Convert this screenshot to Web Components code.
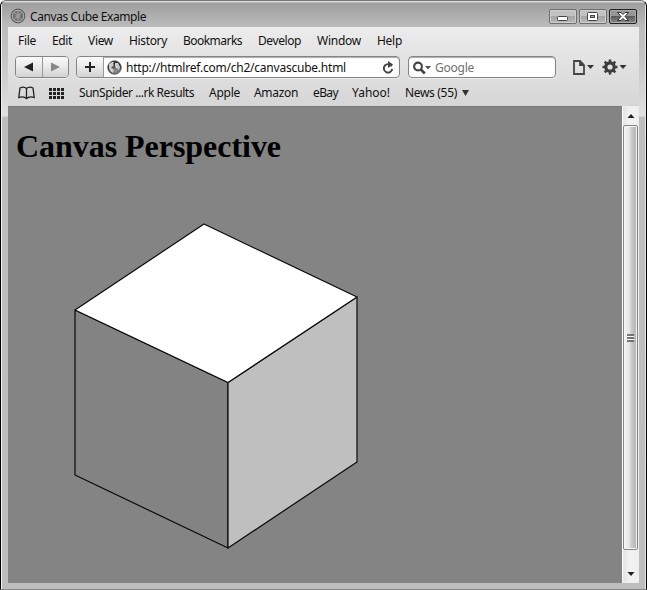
<!DOCTYPE html>
<html lang="en"><head><meta charset="utf-8"><title>Canvas Cube Example</title>
<style>html,body{margin:0;height:100%;overflow:hidden;background:#fff}</style></head>
<body>
<browser-window>
  <title-bar slot="title">Canvas Cube Example</title-bar>
  <menu-bar slot="chrome"></menu-bar>
  <tool-bar slot="chrome"></tool-bar>
  <bookmark-bar slot="chrome"></bookmark-bar>
  <page-view slot="page"><page-heading>Canvas Perspective</page-heading><cube-drawing></cube-drawing></page-view>
  <scroll-bar slot="page"></scroll-bar>
</browser-window>
<script>
function define(name, html, ready){
  customElements.define(name, class extends HTMLElement{
    constructor(){ super(); this.attachShadow({mode:'open'}).innerHTML = html; }
    connectedCallback(){ if(ready) ready(this); }
  });
}

/* A one-line label whose tracking is adjusted to fill the width in its "w" attribute. */
define('fit-label', `<style>
:host{display:block;flex:none;white-space:nowrap;height:16px;line-height:16px}
span{display:inline-block}
</style><span><slot></slot></span>`, el=>{
  const s = el.shadowRoot.querySelector('span'), w = +el.getAttribute('w');
  el.style.width = w + 'px';
  const n = el.textContent.length;
  s.style.letterSpacing = ((w - s.getBoundingClientRect().width) / n) + 'px';
});

define('browser-window', `<style>
:host{display:grid;box-sizing:border-box;width:647px;height:590px;grid-template-rows:26px 79px 477px 5px;
 grid-template-columns:6px 631px 6px;border:1px solid #111;border-left-color:#000;border-top-color:#777;border-right:1px solid #000;border-bottom:1px solid #888;
 border-radius:6px 6px 0 0;background:linear-gradient(90deg,#f2f2f2 1px,transparent 1px,transparent 644px,#e4e4e4 644px),linear-gradient(#d8d8d8 0,#d8d8d8 1px,#9e9e9e 2px,#bcbcbc 26px,#c6c6c6 60px,#e0e0e0 115px,#bebebe 116px,#bdbdbd 100%);
 font:12px "Noto Sans","Open Sans",sans-serif;color:#111;overflow:hidden;padding-left:1px;padding-right:1px}
.title{grid-column:1/4}
.chrome{grid-column:2;display:flex;flex-direction:column;background:linear-gradient(#ececec,#e2e2e2 45%,#d6d6d6)}
.page{grid-column:2;display:grid;grid-template-columns:614px 17px}
</style><div class="title"><slot name="title"></slot></div><div class="chrome"><slot name="chrome"></slot></div><div class="page"><slot name="page"></slot></div>`);

define('window-button', `<style>
:host{display:block;box-sizing:border-box;width:28px;height:15px;border:1px solid #6e6e6e;border-radius:2px;
 background:linear-gradient(#c2c2c2 45%,#a5a5a5 50%,#b8b8b8);box-shadow:inset 0 0 0 1px #cfcfcf}
:host([kind=close]){border-color:#222;background:linear-gradient(#969696 45%,#5a5a5a 50%,#8b8b8b);box-shadow:inset 0 0 0 1px #aaa}
svg{display:block}
</style><svg width="26" height="13"></svg>`, el=>{
  el.shadowRoot.querySelector('svg').innerHTML = {
    min:'<rect x="7.500" y="6.500" width="10" height="4" rx="1" fill="#fff" stroke="#444"/>',
    max:'<rect x="7.500" y="2.500" width="10" height="8" rx="1" fill="#fff" stroke="#444"/><rect x="10.500" y="5.500" width="4" height="2" fill="#aaa" stroke="#444"/>',
    close:'<path d="M7.500 2.500h3.500l2 2 2-2h3.500l-3.500 4 3.500 4H15l-2-2-2 2H7.500l3.500-4z" fill="#fff" stroke="#333"/>'
  }[el.getAttribute('kind')];
});

define('globe-icon', `<style>:host{display:block;width:15px;height:15px;flex:none}svg{display:block}</style>
<svg width="15" height="15" viewBox="0 0 15 15"><defs><radialGradient id="g" cx=".6" cy=".75"><stop stop-color="#999"/><stop offset="1" stop-color="#333"/></radialGradient></defs>
<circle cx="7.500" cy="7.500" r="6.800" fill="url(#g)" stroke="#555" stroke-width=".8"/>
<path d="M2 4 5 2 7 2 6 4 7 5 5 7 4 7 7 10 6 13 3 11 2 8zM8 3l3 0 2 4-1 4-1-2-2-1-1-2z" fill="#ccc"/></svg>`);

define('compass-icon', `<style>:host{display:block;width:16px;height:16px;flex:none}svg{display:block}</style>
<svg width="16" height="16" viewBox="0 0 16 16"><circle cx="8" cy="8" r="6.900" fill="#8d8d8d" stroke="#555"/><circle cx="8" cy="8" r="5.500" fill="#696969" stroke="#bbb" stroke-width=".8"/>
<path d="M4.500 5 8 7l3.500-2M5 8h6M4.500 11 8 9l3 2M8 3v10" stroke="#bbb" fill="none" stroke-width=".8"/><path d="m11.500 4.500-2.600 4.400-4.400 2.600 2.600-4.400z" fill="#999"/></svg>`);

define('title-bar', `<style>
:host{display:flex;height:26px;align-items:flex-start}
compass-icon{margin:7px 4px 0 8px}
fit-label{margin-top:8px}
.buttons{display:flex;gap:2px;margin:8px 0 0 auto;padding-right:8px}
</style><compass-icon></compass-icon><fit-label w="116"></fit-label><div class="buttons"><window-button kind="min"></window-button><window-button kind="max"></window-button><window-button kind="close"></window-button></div>`, el=>{
  const old = el.shadowRoot.querySelector('fit-label'), label = document.createElement('fit-label');
  label.setAttribute('w','116'); label.textContent = el.textContent; old.replaceWith(label);
});

define('menu-bar', `<style>:host{display:flex;height:27px;box-sizing:border-box;padding:6px 0 0 10px;gap:16px}</style>
<fit-label w="18">File</fit-label><fit-label w="20">Edit</fit-label><fit-label w="25">View</fit-label><fit-label w="38">History</fit-label><fit-label w="59">Bookmarks</fit-label><fit-label w="43">Develop</fit-label><fit-label w="44">Window</fit-label><fit-label w="25">Help</fit-label>`);

define('tool-bar', `<style>
:host{display:flex;height:26px;box-sizing:border-box;padding:2px 0 0 7px}
.box{box-sizing:border-box;height:22px;border:1px solid #858585;border-radius:4px;display:flex;overflow:hidden;background:#fff;box-shadow:inset 0 1px 1px #aaa,0 1px #eee}
.btn{display:grid;place-items:center;background:linear-gradient(#fafafa,#e9e9e9 50%,#d2d2d2);border-right:1px solid #999;height:20px;width:26px;box-sizing:border-box}
.nav{width:54px;margin-right:7px}.nav .btn:last-child{border:0}
.url{width:324px;margin-right:8px}
.url globe-icon{margin:3px 4px 0 3px}
fit-label{margin-top:3px}
.reload{margin:4px 4px 0 auto}
.search{width:148px;color:#707070}
svg{display:block;flex:none}
</style>
<div class="box nav"><div class="btn" style="width:27px"><svg width="9" height="10"><path d="M0 5 9 .5v9z" fill="#222"/></svg></div><div class="btn"><svg width="9" height="10"><path d="M9 5 0 .5v9z" fill="#888"/></svg></div></div>
<div class="box url"><div class="btn" style="width:27px"><svg width="10" height="10"><path d="M5 0v10M0 5h10" stroke="#222" stroke-width="2"/></svg></div><globe-icon></globe-icon><fit-label w="220">http://htmlref.com/ch2/canvascube.html</fit-label>
<svg class="reload" width="14" height="14"><path d="M10.700 5.300A4.200 4.200 0 1 0 11.200 8" fill="none" stroke="#444" stroke-width="1.900"/><path d="M7 0l5 3.500L7 7z" fill="#444"/></svg></div>
<div class="box search"><svg style="margin:4px 4px 0 4px" width="18" height="15"><circle cx="5" cy="5.500" r="3.900" fill="none" stroke="#444" stroke-width="2.100"/><path d="m7.800 8.500 4 4" stroke="#444" stroke-width="2.600"/><path d="M12 5h6l-3 3.500z" fill="#555"/></svg><fit-label w="39">Google</fit-label></div>
<svg style="margin:4px 0 0 17px" width="22" height="16"><path d="M1 1h6l4 4v9H1zM7 1v4h4" fill="none" stroke="#444" stroke-width="1.800"/><path d="M14 5h7l-3.500 4z" fill="#333"/></svg>
<svg style="margin:3px 0 0 7px" width="26" height="16"><circle cx="8" cy="8" r="4.200" fill="none" stroke="#3c3c3c" stroke-width="3.200"/><path d="M8 .5v3M8 12.500v3M.5 8h3M12.500 8h3M2.700 2.700l2 2M11.300 11.300l2 2M13.300 2.700l-2 2M2.700 13.300l2-2" stroke="#3c3c3c" stroke-width="2.600"/><path d="M17.500 6h7l-3.500 4z" fill="#333"/></svg>`);

define('bookmark-bar', `<style>:host{display:flex;height:26px;box-sizing:border-box;padding:5px 0 0 10px}svg{flex:none;display:block}</style>
<svg width="17" height="14" style="margin:1px 14px 0 0"><path d="M8.500 2.500C6.500.7 4 1 2 2L.8 11.500C3.500 10.500 6.500 10.500 8.500 12.500 10.500 10.500 13.500 10.500 16.200 11.500L15 2C13 1 10.500.7 8.500 2.500zM8.500 2.500v10" fill="none" stroke="#222" stroke-width="1.300"/></svg>
<svg width="16" height="13" style="margin:3px 14px 0 0"><path d="M0 1.500h15M0 5.500h15M0 9.500h15" stroke="#222" stroke-width="3" stroke-dasharray="3 1"/></svg>
<fit-label w="115" style="margin-right:15px">SunSpider ...rk Results</fit-label><fit-label w="31" style="margin-right:14px">Apple</fit-label><fit-label w="44" style="margin-right:15px">Amazon</fit-label><fit-label w="25" style="margin-right:14px">eBay</fit-label><fit-label w="38" style="margin-right:15px">Yahoo!</fit-label><fit-label w="52">News (55)</fit-label>
<svg width="8" height="8" style="margin:4px 0 0 5px"><path d="M0 1h7L3.500 7z" fill="#333"/></svg>`);

define('page-view', `<style>:host{display:block;height:477px;background:#848484;box-shadow:inset 0 1px #777}</style><slot></slot>`);
define('page-heading', `<style>:host{display:block;padding:22px 0 0 8px}h1{margin:0;font:bold 32px/37px "Liberation Serif",serif;letter-spacing:-.04px;color:#000}</style><h1><slot></slot></h1>`);
define('cube-drawing', `<style>:host{display:block;padding:51px 0 0 60px}svg{display:block}</style>
<svg width="300" height="340" viewBox="68 216 300 340" stroke="#0a0a0a" stroke-width="1.200" stroke-linejoin="round">
<path d="M75 310 228 382.500V548L75 475z" fill="#838383"/><path d="M228 382.500 357 297V462L228 548z" fill="#bfbfbf"/><path d="M204 224 357 297 228 382.500 75 310z" fill="#fff"/></svg>`);

define('scroll-bar', `<style>
:host{display:flex;flex-direction:column;height:477px;box-sizing:border-box;border-left:1px solid #fff;background:linear-gradient(90deg,#e4e4e4,#f2f2f2 40%,#efefef);border-top:1px solid #eee}
.end{height:18px;display:grid;place-items:center}
.end:last-child{flex:1;padding-top:15px}
.thumb{box-sizing:border-box;height:425px;width:15px;border:1px solid #858585;border-radius:2px;background:linear-gradient(90deg,#f5f5f5,#e5e5e5 40%,#c8c8c8 60%,#b5b5b5 92%,#ddd);display:grid;place-items:center;box-shadow:inset 0 0 0 1px #f4f4f4}
svg{display:block}
</style><div class="end"><svg width="8" height="5"><path d="M.5 4 4 0l3.500 4z" fill="#222"/></svg></div>
<div class="thumb"><svg width="7" height="8"><path d="M0 1h7M0 4h7M0 7h7" stroke="#555" stroke-width="1.500"/><path d="M0 2.500h7M0 5.500h7" stroke="#fff"/></svg></div>
<div class="end"><svg width="8" height="5"><path d="M.5 0h7L4 4z" fill="#222"/></svg></div>`);
</script>
</body></html>
